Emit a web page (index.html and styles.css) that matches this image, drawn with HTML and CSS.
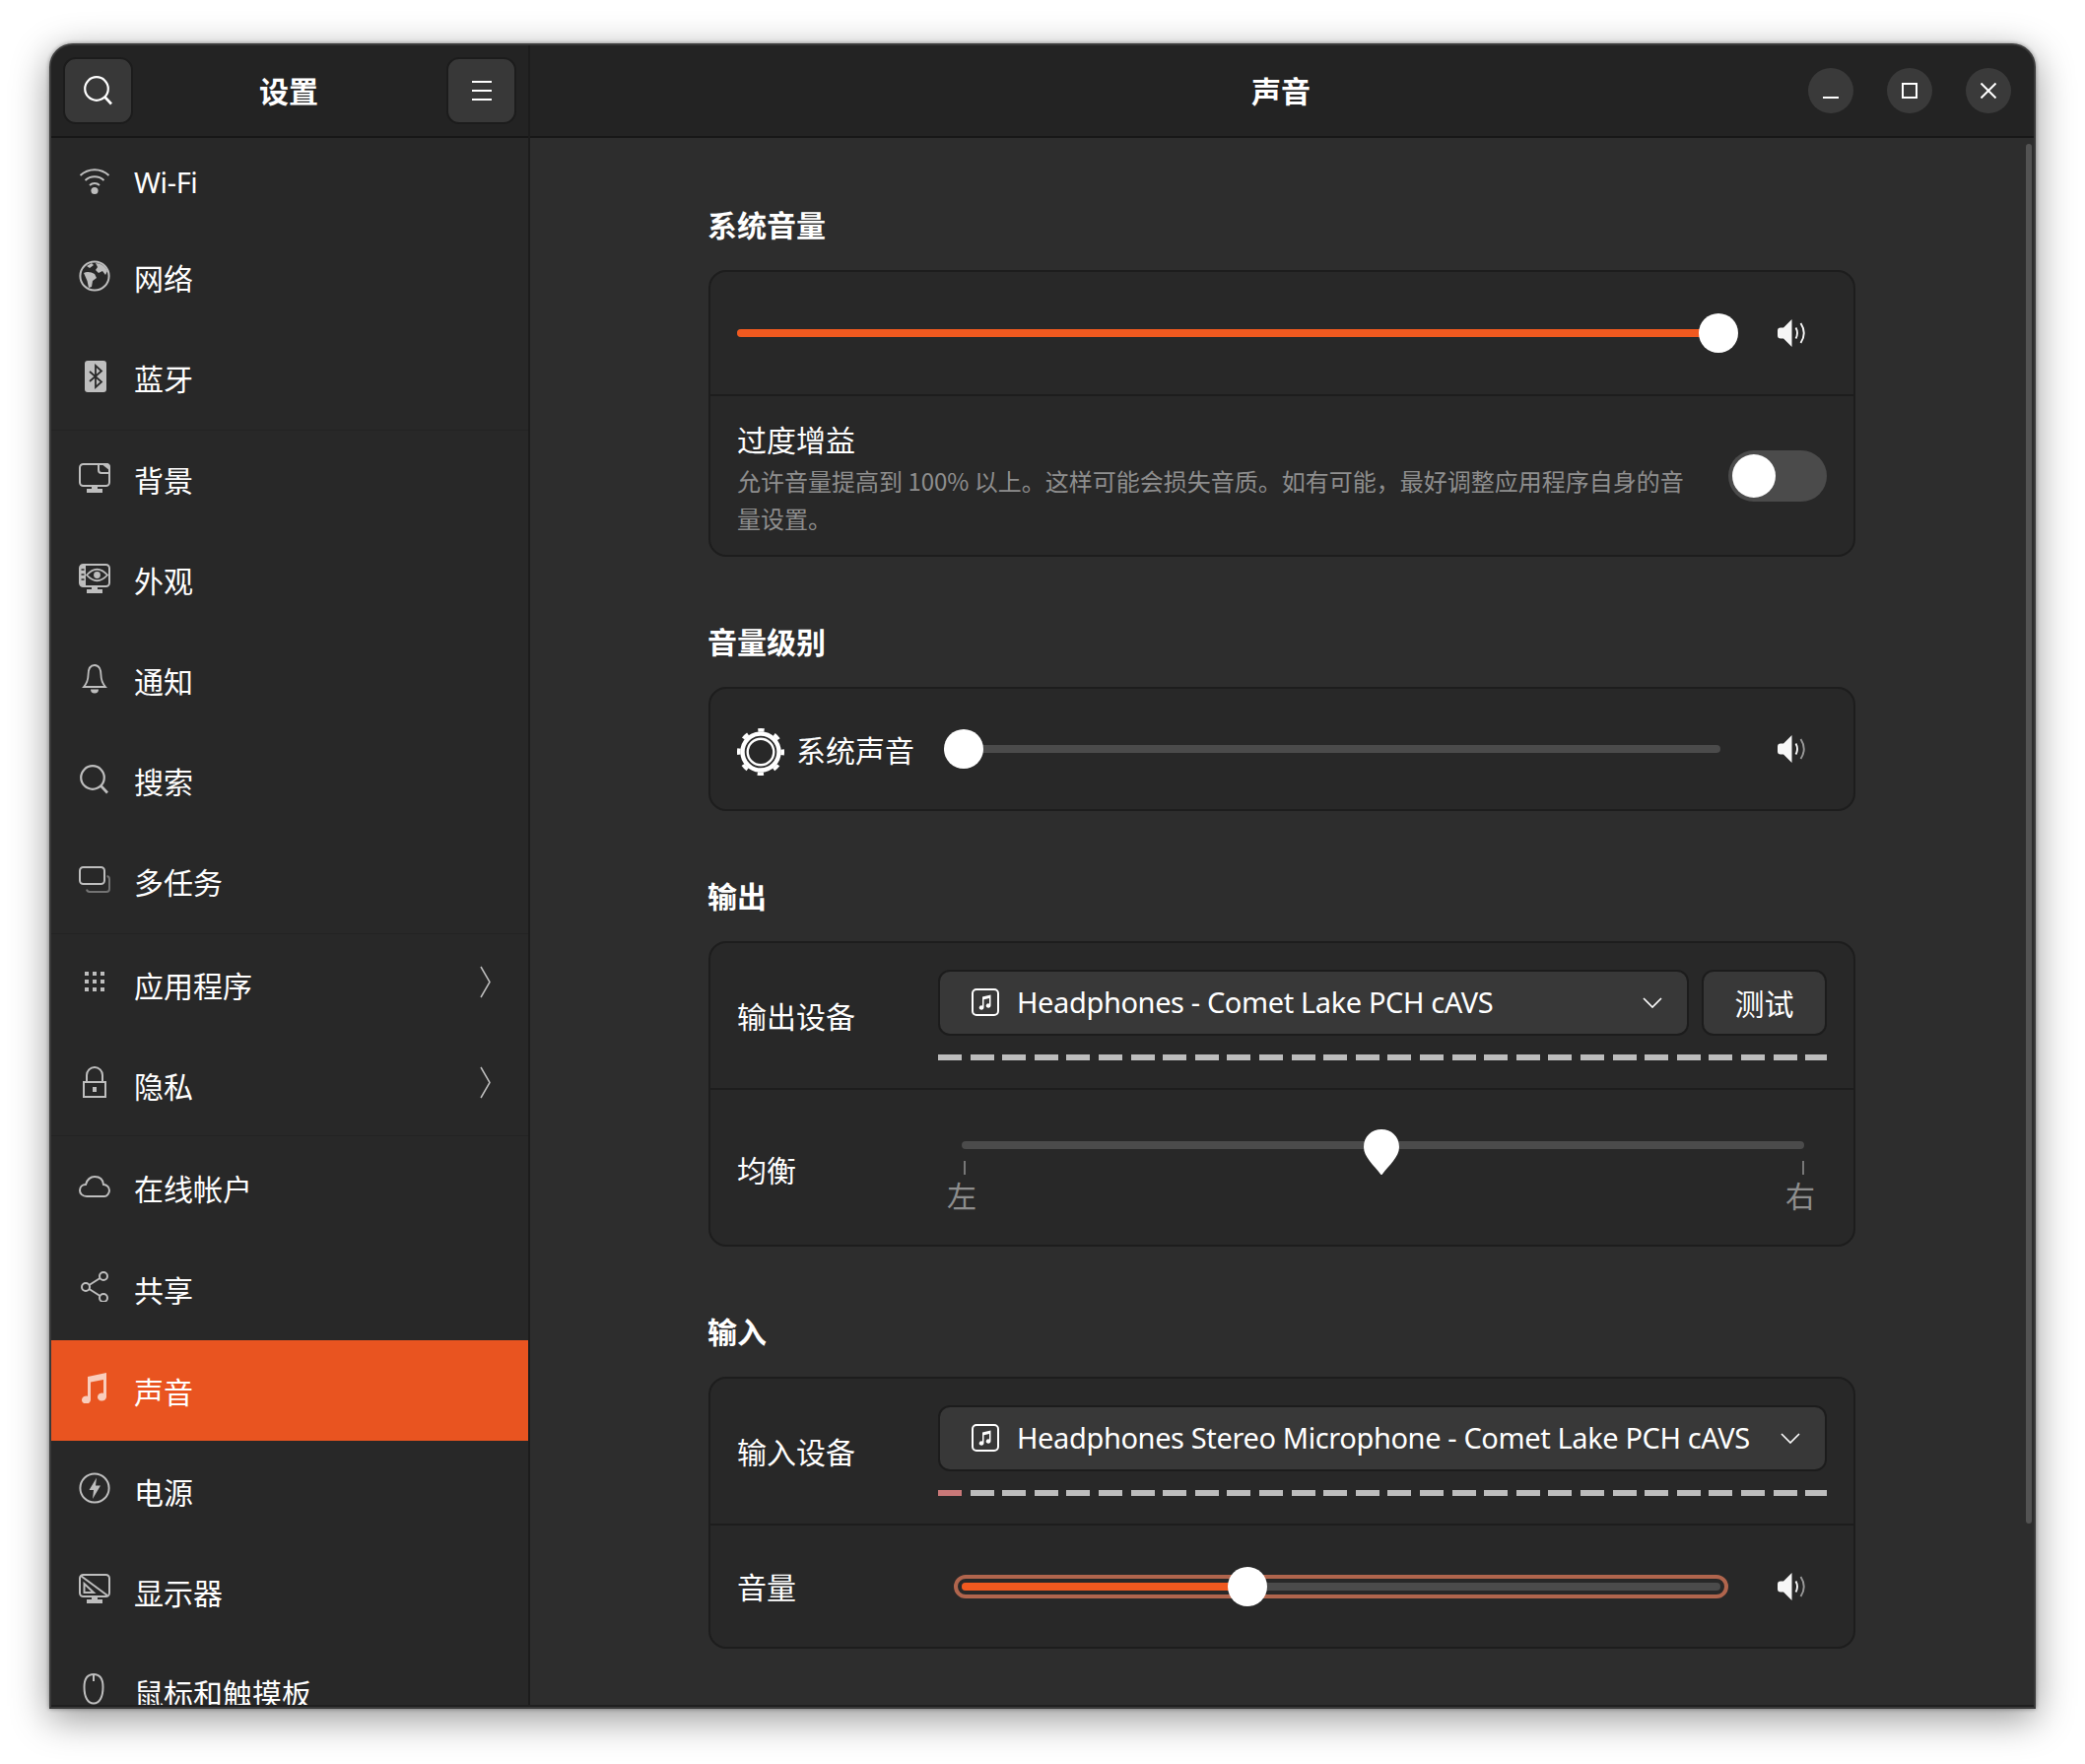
FILE: index.html
```html
<!DOCTYPE html>
<html lang="zh-CN">
<head>
  <meta charset="UTF-8" />
  <title>设置 - 声音</title>
  <link rel="stylesheet" href="styles.css">
</head>
<body>
  <!-- icon set, everything is drawn on a 32px box -->
  <svg class="defs" width="0" height="0">
    <symbol id="i-search" viewBox="0 0 32 32"><circle cx="14" cy="14" r="11.8" fill="none" stroke="currentColor" stroke-width="2.2"/><path d="M22.5 22.5L29 29.5" stroke="currentColor" stroke-width="2.6" fill="none"/></symbol>
    <symbol id="i-wifi" viewBox="0 0 32 32"><g fill="none" stroke="currentColor" stroke-width="2"><path d="M1.5 11A21 21 0 0 1 30.5 11"/><path d="M6.5 16A14 14 0 0 1 25.5 16"/><path d="M11 21A7.5 7.5 0 0 1 21 21"/></g><circle cx="16" cy="26.5" r="3.6" fill="currentColor"/></symbol>
    <symbol id="i-globe" viewBox="0 0 32 32"><circle cx="16" cy="16" r="14.6" fill="none" stroke="currentColor" stroke-width="2"/><path fill="currentColor" d="M5 13C8 11 13 12 16 14L18 18L14 21L13 27L10 28L8.5 21ZM17 3C22 3 27 6 29 11L27 15L24 11L20 13L17 10L19 7ZM8 6L13 3L15 5L11 8Z"/></symbol>
    <symbol id="i-bluetooth" viewBox="0 0 32 32"><rect x="6" width="22" height="32" rx="3" fill="currentColor"/><path d="M11 11L23 21.5L17 27V5L23 10.5L11 21" fill="none" stroke="#282828" stroke-width="1.8"/></symbol>
    <symbol id="i-wallpaper" viewBox="0 0 32 32"><rect x="1" y="2" width="30" height="22" rx="3.5" fill="none" stroke="currentColor" stroke-width="2"/><path d="M20 2V8Q20 11 23 11H31" fill="none" stroke="currentColor" stroke-width="2"/><path d="M22 1H28Q32 1 32 5V9Z" fill="currentColor"/><path d="M13 24H19V27H24V31H8V27H13Z" fill="currentColor"/></symbol>
    <symbol id="i-appearance" viewBox="0 0 32 32"><rect x="1" y="2" width="30" height="22" rx="3.5" fill="none" stroke="currentColor" stroke-width="2"/><path d="M1 5Q1 2 4 2H7V24H4Q1 24 1 21Z" fill="currentColor"/><path d="M2.5 7H5.5M2.5 12H5.5M2.5 17H5.5" stroke="#282828" stroke-width="1.6"/><path d="M8 12.5Q18.5 1 29 12.5Q18.5 24 8 12.5Z" fill="none" stroke="currentColor" stroke-width="1.8"/><circle cx="18.5" cy="12.5" r="3.4" fill="currentColor"/><path d="M13 24H19V27H24V31H8V27H13Z" fill="currentColor"/></symbol>
    <symbol id="i-bell" viewBox="0 0 32 32"><path d="M16 2C11 2 9.5 7 9.5 12C9.5 17 7.5 21 5 24H27C24.5 21 22.5 17 22.5 12C22.5 7 21 2 16 2Z" fill="none" stroke="currentColor" stroke-width="1.8"/><path d="M12 26.5H20A4 4 0 0 1 12 26.5Z" fill="currentColor"/></symbol>
    <symbol id="i-multitask" viewBox="0 0 32 32"><rect x="1" y="3" width="25" height="17" rx="3.5" fill="none" stroke="currentColor" stroke-width="2"/><path d="M28.5 12Q31 12.5 31 15V25Q31 28 28 28H11Q8.5 28 8 25.5" fill="none" stroke="currentColor" stroke-width="2" opacity=".5"/></symbol>
    <symbol id="i-apps" viewBox="0 0 32 32"><path fill="currentColor" d="M6 6h4v4H6zM14 6h4v4h-4zM22 6h4v4h-4zM6 14h4v4H6zM14 14h4v4h-4zM22 14h4v4h-4zM6 22h4v4H6zM14 22h4v4h-4zM22 22h4v4h-4z"/></symbol>
    <symbol id="i-lock" viewBox="0 0 32 32"><rect x="5" y="16" width="22" height="15" fill="none" stroke="currentColor" stroke-width="2"/><path d="M8 16V9A8 8 0 0 1 24 9V16" fill="none" stroke="currentColor" stroke-width="2"/><rect x="14" y="21" width="4" height="5" fill="currentColor"/></symbol>
    <symbol id="i-cloud" viewBox="0 0 32 32"><path d="M8 28C3.5 28 1 25 1 22C1 18.5 3.5 16 7 16C8 11 12 8 16 8C21 8 24.5 11 25 16C28.5 16 31 19 31 22C31 25 28.5 28 26 28Z" fill="none" stroke="currentColor" stroke-width="2"/></symbol>
    <symbol id="i-share" viewBox="0 0 32 32"><g fill="none" stroke="currentColor" stroke-width="2"><circle cx="25" cy="6" r="4"/><circle cx="7" cy="17" r="4"/><circle cx="25" cy="28" r="4"/><path d="M10.5 15L21.5 8M10.5 19L21.5 26"/></g></symbol>
    <symbol id="i-music" viewBox="0 0 32 32"><path fill="currentColor" d="M9 5L28 1V25.5A4.5 4 0 1 1 25 21.8V8L12 10.5V28.5A4.5 4 0 1 1 9 24.8Z"/></symbol>
    <symbol id="i-power" viewBox="0 0 32 32"><circle cx="16" cy="16" r="14.6" fill="none" stroke="currentColor" stroke-width="2"/><path d="M18 5.5L10.5 18H15L14 27L22 13.5H17Z" fill="currentColor"/></symbol>
    <symbol id="i-display" viewBox="0 0 32 32"><rect x="1" y="2" width="30" height="22" rx="3.5" fill="none" stroke="currentColor" stroke-width="2"/><path d="M2 3L29 23" stroke="currentColor" stroke-width="2"/><path d="M5.5 11L15 20H5.5Z" fill="none" stroke="currentColor" stroke-width="2"/><path d="M13 24H19V27H24V31H8V27H13Z" fill="currentColor"/></symbol>
    <symbol id="i-mouse" viewBox="0 0 32 32"><path d="M15 1C9 1 5.5 5 5.5 14C5.5 24 9 30.5 15 30.5C21 30.5 24.5 24 24.5 14C24.5 5 21 1 15 1Z" fill="none" stroke="currentColor" stroke-width="2"/><path d="M15 1V8" stroke="currentColor" stroke-width="2"/></symbol>
    <symbol id="i-speaker" viewBox="0 0 28 28"><path fill="currentColor" d="M3 8.5H6L14.5 0V28L6 19.5H3Q0 19.5 0 16.5V11.5Q0 8.5 3 8.5Z"/><path d="M18.5 8.5Q21.5 14 18.5 19.5" fill="none" stroke="currentColor" stroke-width="1.9"/><path class="outer-arc" d="M23.5 4Q30 14 23.5 24" fill="none" stroke="currentColor" stroke-width="1.9"/></symbol>
    <symbol id="i-note-box" viewBox="0 0 28 28"><rect x="1" y="1" width="26" height="26" rx="4" fill="none" stroke="currentColor" stroke-width="2"/><path fill="currentColor" d="M11 8.5L19.5 6.5V17.5A2.4 2.1 0 1 1 18 15.6V10L12.5 11.2V19.5A2.4 2.1 0 1 1 11 17.6Z"/></symbol>
  </svg>

  <div class="window">
    <div class="sidebar">
      <header class="header-bar side-header">
        <button class="head-btn"><svg class="icon"><use href="#i-search"/></svg></button>
        <span class="title">设置</span>
        <button class="head-btn"><span class="burger"></span></button>
      </header>

      <div class="nav">
        <div class="nav-group upper">
          <div class="nav-row nav-first"><svg class="icon"><use href="#i-wifi"/></svg><span class="latin">Wi-Fi</span></div>
          <div class="nav-row"><svg class="icon"><use href="#i-globe"/></svg><span>网络</span></div>
          <div class="nav-row"><svg class="icon"><use href="#i-bluetooth"/></svg><span>蓝牙</span></div>
        </div>
        <div class="nav-group upper">
          <div class="nav-row"><svg class="icon"><use href="#i-wallpaper"/></svg><span>背景</span></div>
          <div class="nav-row"><svg class="icon"><use href="#i-appearance"/></svg><span>外观</span></div>
          <div class="nav-row"><svg class="icon"><use href="#i-bell"/></svg><span>通知</span></div>
          <div class="nav-row"><svg class="icon"><use href="#i-search"/></svg><span>搜索</span></div>
          <div class="nav-row"><svg class="icon"><use href="#i-multitask"/></svg><span>多任务</span></div>
        </div>
        <div class="nav-group">
          <div class="nav-row"><svg class="icon"><use href="#i-apps"/></svg><span>应用程序</span><svg class="nav-arrow" viewBox="0 0 11 33"><path d="M1 1L10 16.5L1 32"/></svg></div>
          <div class="nav-row"><svg class="icon"><use href="#i-lock"/></svg><span>隐私</span><svg class="nav-arrow" viewBox="0 0 11 33"><path d="M1 1L10 16.5L1 32"/></svg></div>
        </div>
        <div class="nav-group">
          <div class="nav-row nav-tall"><svg class="icon"><use href="#i-cloud"/></svg><span>在线帐户</span></div>
          <div class="nav-row nav-tall"><svg class="icon"><use href="#i-share"/></svg><span>共享</span></div>
          <div class="nav-row selected"><svg class="icon"><use href="#i-music"/></svg><span>声音</span></div>
          <div class="nav-row"><svg class="icon"><use href="#i-power"/></svg><span>电源</span></div>
          <div class="nav-row"><svg class="icon"><use href="#i-display"/></svg><span>显示器</span></div>
          <div class="nav-row"><svg class="icon"><use href="#i-mouse"/></svg><span>鼠标和触摸板</span></div>
        </div>
      </div>
    </div>

    <div class="main">
      <header class="header-bar main-header">
        <span></span>
        <span class="title">声音</span>
        <div class="win-btns">
          <button class="win-btn"><svg viewBox="0 0 16 16"><path d="M0 15H16"/></svg></button>
          <button class="win-btn"><svg viewBox="0 0 16 16"><rect x="1" y="1" width="14" height="14"/></svg></button>
          <button class="win-btn"><svg viewBox="0 0 16 16"><path d="M.5 .5L15.5 15.5M15.5 .5L.5 15.5"/></svg></button>
        </div>
      </header>

      <div class="content">
        <h2 class="section-title">系统音量</h2>
        <section class="card">
          <div class="row volume-row">
            <div class="track"><div class="fill" style="width: 100%"></div><div class="thumb" style="left: 100%"></div></div>
            <svg class="speaker full"><use href="#i-speaker"/></svg>
          </div>
          <div class="row boost-row">
            <div class="boost-text">
              <div class="boost-title">过度增益</div>
              <div class="boost-desc">允许音量提高到 100% 以上。这样可能会损失音质。如有可能，最好调整应用程序自身的音量设置。</div>
            </div>
            <div class="toggle"><div class="toggle-knob"></div></div>
          </div>
        </section>

        <h2 class="section-title">音量级别</h2>
        <section class="card">
          <div class="row level-row">
            <svg class="gear" viewBox="0 0 48 48">
              <g fill="none" stroke="#fff">
                <circle cx="24" cy="24" r="18.5" stroke-width="4.4"/>
                <circle cx="24" cy="24" r="22.2" stroke-width="3.6" stroke-dasharray="6.5 10.9" stroke-dashoffset="3.25"/>
                <circle cx="24" cy="24" r="13.3" stroke-width="2.4"/>
              </g>
            </svg>
            <span class="level-name">系统声音</span>
            <div class="track"><div class="thumb" style="left: 0%"></div></div>
            <svg class="speaker"><use href="#i-speaker"/></svg>
          </div>
        </section>

        <h2 class="section-title">输出</h2>
        <section class="card">
          <div class="row device-row">
            <span class="row-label">输出设备</span>
            <div class="control">
              <div class="device-line">
                <div class="combo">
                  <svg class="note-box"><use href="#i-note-box"/></svg>
                  <span class="latin">Headphones - Comet Lake PCH cAVS</span>
                  <svg class="combo-arrow" viewBox="0 0 20 11"><path d="M1 1L10 10L19 1"/></svg>
                </div>
                <button class="test-btn">测试</button>
              </div>
              <div class="level-bar"></div>
            </div>
          </div>
          <div class="row balance-row">
            <span class="row-label">均衡</span>
            <div class="balance">
              <div class="track">
                <svg class="pin" style="left: 49.8%" viewBox="0 0 36 46"><path d="M18 0C28 0 36 7 36 18C36 28 26 36 18.5 46H17.5C10 36 0 28 0 18C0 7 8 0 18 0Z"/></svg>
              </div>
              <div class="marks">
                <div class="mark"><i></i>左</div>
                <div class="mark"><i></i>右</div>
              </div>
            </div>
          </div>
        </section>

        <h2 class="section-title">输入</h2>
        <section class="card">
          <div class="row device-row">
            <span class="row-label">输入设备</span>
            <div class="control">
              <div class="device-line">
                <div class="combo">
                  <svg class="note-box"><use href="#i-note-box"/></svg>
                  <span class="latin">Headphones Stereo Microphone - Comet Lake PCH cAVS</span>
                  <svg class="combo-arrow" viewBox="0 0 20 11"><path d="M1 1L10 10L19 1"/></svg>
                </div>
              </div>
              <div class="level-bar has-signal"></div>
            </div>
          </div>
          <div class="row input-volume-row">
            <span class="row-label">音量</span>
            <div class="focus-ring">
              <div class="track"><div class="fill" style="width: 37.7%"></div><div class="thumb" style="left: 37.7%"></div></div>
            </div>
            <svg class="speaker"><use href="#i-speaker"/></svg>
          </div>
        </section>
      </div>

      <div class="scrollbar"></div>
    </div>
    <div class="bottom-edge"></div>
  </div>
</body>
</html>
```

FILE: styles.css
```css
* {
  box-sizing: border-box;
}
html, body {
  margin: 0;
  height: 100%;
}
body {
  padding: 44px 50px 0;
  background: #fff;
  overflow: hidden;
  font-family: "Noto Sans CJK SC", "Noto Sans", sans-serif;
  font-size: 30px;
  color: #fff;
}
button {
  font: inherit;
  color: inherit;
  padding: 0;
}
.defs {
  position: absolute;
}
.latin {
  font-family: "Noto Sans", "Noto Sans CJK SC", sans-serif;
  font-size: 29px;
  letter-spacing: -.38px;
}

/* window frame */
.window {
  position: relative;
  display: flex;
  width: 2016px;
  height: 1690px;
  border: 2px solid #3a3a3a;
  border-bottom: 0;
  border-radius: 24px 24px 0 0;
  overflow: hidden;
  background: #2d2d2d;
  box-shadow: 0 10px 38px rgba(0, 0, 0, .42), 0 0 4px rgba(0, 0, 0, .4);
}
.bottom-edge {
  position: absolute;
  left: 0;
  right: 0;
  bottom: 0;
  height: 4px;
  background: #3a3a3a;
  border-top: 2px solid #1f1f1f;
}
.header-bar {
  height: 94px;
  flex: none;
  background: #232323;
  border-bottom: 2px solid #171717;
}
.title {
  font-weight: 700;
  text-align: center;
  padding: 0 2px 3px 0;
}

/* sidebar */
.sidebar {
  width: 486px;
  flex: none;
  display: flex;
  flex-direction: column;
  background: #282828;
  border-right: 2px solid #1c1c1c;
}
.side-header {
  display: flex;
  align-items: center;
  justify-content: space-between;
  padding: 0 12px;
}
.head-btn {
  width: 71px;
  height: 68px;
  display: flex;
  align-items: center;
  justify-content: center;
  background: #383838;
  border: 2px solid #1c1c1c;
  border-radius: 13px;
}
.burger {
  width: 20px;
  height: 20px;
  border-top: 2px solid #fff;
  border-bottom: 2px solid #fff;
  position: relative;
}
.burger::after {
  content: "";
  position: absolute;
  left: 0;
  right: 0;
  top: 7px;
  height: 2px;
  background: #fff;
}
.icon {
  width: 32px;
  height: 32px;
  flex: none;
  color: #bebebe;
}
.head-btn .icon {
  color: #fff;
}
.nav {
  flex: 1;
  overflow: hidden;
}
.nav-group {
  border-bottom: 1px solid #232323;
}
.nav-group:last-child {
  border-bottom: 0;
}
.nav-row {
  height: 102px;
  display: flex;
  align-items: center;
  gap: 24px;
  padding: 0 38px 0 28px;
}
.nav-first {
  height: 92px;
}
.nav-tall {
  height: 103.5px;
}
.nav-row .icon {
  margin-top: -6px;
}
.upper .nav-row {
  padding-bottom: 4px;
}
.upper .nav-row .icon {
  margin-top: -2px;
}
.nav-row.selected {
  background: #e95420;
}
.nav-row.selected .icon {
  color: #f9cdbc;
}
.nav-arrow {
  width: 11px;
  height: 33px;
  margin-left: auto;
  margin-top: -6px;
  fill: none;
  stroke: #bebebe;
  stroke-width: 1.5;
}

/* main pane */
.main {
  position: relative;
  flex: 1;
  display: flex;
  flex-direction: column;
  min-width: 0;
}
.main-header {
  display: grid;
  grid-template-columns: 1fr auto 1fr;
  align-items: center;
}
.win-btns {
  display: flex;
  justify-content: flex-end;
  gap: 34px;
  padding-right: 23px;
}
.win-btn {
  width: 46px;
  height: 46px;
  border: 0;
  border-radius: 50%;
  background: #3a3a3a;
  display: flex;
  align-items: center;
  justify-content: center;
}
.win-btn svg {
  width: 16px;
  height: 16px;
  fill: none;
  stroke: #fff;
  stroke-width: 2;
}
.content {
  flex: 1;
  width: 1164px;
  margin: 0 auto;
  padding-top: 2px;
}
.scrollbar {
  position: absolute;
  right: 2px;
  top: 100px;
  bottom: 188px;
  width: 6px;
  border-radius: 3px;
  background: #535353;
}
.section-title {
  margin: 65px 0 27px -1px;
  font-size: 30px;
  line-height: 40px;
  font-weight: 700;
}
.card {
  background: #282828;
  border: 2px solid #1d1d1d;
  border-radius: 18px;
}
.row {
  display: flex;
  align-items: center;
  padding: 0 27px;
  border-bottom: 2px solid #1d1d1d;
}
.row:last-child {
  border-bottom: 0;
}
.row-label {
  width: 204px;
  flex: none;
}

/* sliders */
.track {
  position: relative;
  flex: 1;
  height: 8px;
  border-radius: 4px;
  background: #4b4b4b;
}
.fill {
  height: 100%;
  border-radius: 4px;
  background: #f0591f;
}
.thumb {
  position: absolute;
  top: -16px;
  width: 40px;
  height: 40px;
  margin-left: -20px;
  border-radius: 50%;
  background: #fff;
}
.speaker {
  --outer-arc: .55;
  width: 28px;
  height: 28px;
  flex: none;
  margin-right: 22px;
  color: #f6f6f6;
}
.speaker.full {
  --outer-arc: 1;
}
.outer-arc {
  opacity: var(--outer-arc);
}

/* system volume card */
.volume-row {
  height: 126px;
}
.volume-row .speaker {
  margin-left: 60px;
}
.boost-row {
  height: 161px;
  justify-content: space-between;
}
.boost-text {
  width: 970px;
  padding-top: 4px;
}
.boost-title {
  line-height: 40px;
}
.boost-desc {
  margin-top: 4px;
  font-size: 24px;
  line-height: 38px;
  color: #8e8e8e;
}
.toggle {
  width: 100px;
  height: 52px;
  padding: 4px;
  border-radius: 26px;
  background: #4b4b4b;
}
.toggle-knob {
  width: 44px;
  height: 44px;
  border-radius: 50%;
  background: #fff;
}

/* level card */
.level-row {
  height: 122px;
}
.gear {
  width: 48px;
  height: 48px;
  flex: none;
  margin-top: 5px;
}
.level-name {
  margin: 0 50px 0 12px;
}
.level-row .speaker {
  margin-left: 58px;
}

/* device rows */
.device-row {
  height: 149px;
}
.device-row .row-label {
  padding-bottom: 2px;
}
.control {
  flex: 1;
  padding-bottom: 2px;
}
.device-line {
  display: flex;
  gap: 13px;
  height: 67px;
}
.combo {
  flex: 1;
  display: flex;
  align-items: center;
  padding: 0 25px 0 32px;
  background: #383838;
  border: 2px solid #1c1c1c;
  border-radius: 12px;
}
.combo .latin {
  margin-left: -1px;
  padding-bottom: 1px;
}
.note-box {
  width: 28px;
  height: 28px;
  flex: none;
  margin-right: 19px;
  color: #fff;
}
.combo-arrow {
  width: 20px;
  height: 11px;
  margin-left: auto;
  fill: none;
  stroke: #fff;
  stroke-width: 1.6;
}
.test-btn {
  width: 127px;
  background: #383838;
  border: 2px solid #1c1c1c;
  border-radius: 12px;
}
.level-bar {
  height: 6px;
  margin-top: 19px;
  background: repeating-linear-gradient(90deg, #bdbdbd 0 24px, transparent 24px 32.6px);
}
.level-bar.has-signal {
  background: linear-gradient(90deg, #c97878 0 24px, transparent 24px), repeating-linear-gradient(90deg, transparent 0 8.6px, #bdbdbd 8.6px 32.6px) 24px 0 no-repeat;
}

/* balance */
.balance-row {
  height: 157px;
  align-items: flex-start;
}
.balance-row .row-label {
  align-self: center;
  padding-top: 3px;
}
.balance {
  flex: 1;
  padding: 52px 23px 0 24px;
}
.pin {
  position: absolute;
  top: -12px;
  width: 36px;
  height: 46px;
  transform: translateX(-50%);
  fill: #fff;
}
.marks {
  display: flex;
  justify-content: space-between;
  margin: 12px -15px 0 -19px;
}
.mark {
  width: 38px;
  display: flex;
  flex-direction: column;
  align-items: center;
  font-size: 30px;
  line-height: 40px;
  color: #8e8e8e;
}
.mark i {
  width: 2px;
  height: 14px;
  margin-left: 5px;
  background: #777;
}

/* input volume */
.input-volume-row {
  height: 123px;
}
.input-volume-row .row-label {
  padding-bottom: 2px;
}
.focus-ring {
  flex: 1;
  height: 24px;
  margin-left: 16px;
  padding: 4px;
  display: flex;
  align-items: center;
  border: 4px solid #b0654d;
  border-radius: 12px;
}
.input-volume-row .speaker {
  margin-left: 50px;
}
```
